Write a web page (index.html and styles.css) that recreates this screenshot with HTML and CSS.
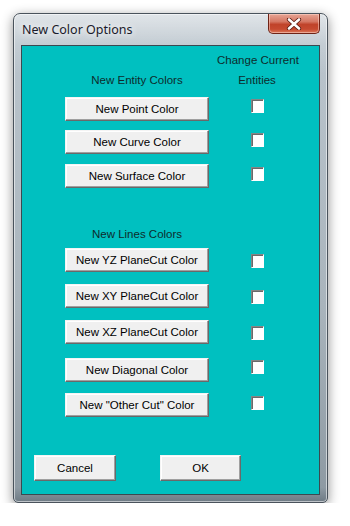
FILE: index.html
```html
<!DOCTYPE html>
<html>
<head>
<meta charset="utf-8">
<link rel="stylesheet" href="styles.css">
</head>
<body>
<div class="window">
  <div class="titlebar">
    <span class="title">New Color Options</span>
    <div class="close">
      <svg width="16" height="12" viewBox="0 0 16 12">
        <path d="M3 1.5 L13 10.5 M13 1.5 L3 10.5" stroke="#5a1a10" stroke-width="4.2" stroke-linecap="round"/>
        <path d="M3 1.5 L13 10.5 M13 1.5 L3 10.5" stroke="#ffffff" stroke-width="2.6" stroke-linecap="round"/>
      </svg>
    </div>
  </div>
  <div class="client">
    <div class="row hdr1">
      <span class="label right">Change Current</span>
    </div>
    <div class="row hdr2">
      <span class="label left">New Entity Colors</span>
      <span class="label right">Entities</span>
    </div>
    <div class="row r-point">
      <button class="btn">New Point Color</button>
      <span class="cb cb-hi"></span>
    </div>
    <div class="row r-curve">
      <button class="btn">New Curve Color</button>
      <span class="cb cb-mid"></span>
    </div>
    <div class="row r-surface">
      <button class="btn">New Surface Color</button>
      <span class="cb cb-mid"></span>
    </div>
    <div class="row hdr3">
      <span class="label left">New Lines Colors</span>
    </div>
    <div class="row r-yz">
      <button class="btn">New YZ PlaneCut Color</button>
      <span class="cb cb-lo"></span>
    </div>
    <div class="row r-xy">
      <button class="btn">New XY PlaneCut Color</button>
      <span class="cb cb-lo"></span>
    </div>
    <div class="row r-xz">
      <button class="btn">New XZ PlaneCut Color</button>
      <span class="cb cb-lo"></span>
    </div>
    <div class="row r-diag">
      <button class="btn">New Diagonal Color</button>
      <span class="cb cb-hi"></span>
    </div>
    <div class="row r-other">
      <button class="btn">New "Other Cut" Color</button>
      <span class="cb cb-mid"></span>
    </div>
    <div class="actions">
      <button class="btn action cancel">Cancel</button>
      <button class="btn action ok">OK</button>
    </div>
  </div>
</div>
</body>
</html>
```

FILE: styles.css
```css
html, body {
  margin: 0;
  padding: 0;
  background: #ffffff;
}

body {
  padding: 13px 0 0 13px;
  font-family: "Liberation Sans", Arial, sans-serif;
}

.window {
  box-sizing: border-box;
  width: 315px;
  height: 490px;
  border: 1px solid #4a535c;
  border-radius: 7px 7px 5px 5px;
  background:
    linear-gradient(180deg, rgba(255,255,255,0.55) 0px, rgba(255,255,255,0.15) 30px, rgba(255,255,255,0) 60px),
    linear-gradient(180deg, #bcc6ce 0%, #a9b4bc 60%, #8e9aa3 97%, #6e7a84 100%);
  padding: 0 7px 7px 7px;
  display: flex;
  flex-direction: column;
  box-shadow: 0 3px 12px rgba(0,0,0,0.45), inset 0 0 0 1px rgba(255,255,255,0.55);
}

.titlebar {
  height: 31px;
  display: flex;
  align-items: flex-start;
  justify-content: space-between;
}

.title {
  margin-top: 7px;
  margin-left: 1px;
  font-family: "Noto Sans", "Open Sans", sans-serif;
  font-size: 12.5px;
  color: #1a1a2a;
  text-shadow: 0 0 6px rgba(255,255,255,0.9), 0 0 10px rgba(255,255,255,0.8);
}

.close {
  box-sizing: border-box;
  width: 52px;
  height: 20px;
  margin-top: 0;
  border: 1px solid #6e2316;
  border-top: none;
  border-radius: 0 0 5px 5px;
  background: linear-gradient(180deg, #e7a595 0%, #d57763 40%, #c0432a 55%, #c64a30 80%, #dc7a5c 100%);
  box-shadow: inset 0 0 0 1px rgba(255,220,210,0.5);
  display: flex;
  align-items: center;
  justify-content: center;
}

.client {
  flex: 1;
  box-sizing: border-box;
  background: #00c0c0;
  border: 1px solid #3b4950;
  display: flex;
  flex-direction: column;
}

.row {
  display: grid;
  grid-template-columns: 43px 144px 8px 80px;
  align-items: start;
}

.label {
  font-size: 11.5px;
  line-height: 20px;
  color: #0e2c2c;
  text-align: center;
  white-space: nowrap;
}

.label.left {
  grid-column: 2;
}

.label.right {
  grid-column: 4;
}

.hdr1 { margin-top: 4px; }
.hdr2 { margin-top: 0; }
.r-point { margin-top: 7px; }
.r-curve { margin-top: 9px; }
.r-surface { margin-top: 10px; }
.hdr3 { margin-top: 36px; }
.r-yz { margin-top: 4px; }
.r-xy { margin-top: 12px; }
.r-xz { margin-top: 12px; }
.r-diag { margin-top: 14px; }
.r-other { margin-top: 11px; }

.btn {
  grid-column: 2;
  box-sizing: border-box;
  height: 24px;
  margin: 0;
  padding: 0;
  font-family: "Liberation Sans", Arial, sans-serif;
  font-size: 11.5px;
  color: #000000;
  background: #f0f0f0;
  border: 1px solid;
  border-color: #f4f4f4 #696969 #696969 #f4f4f4;
  box-shadow: inset -1px -1px 0 #a0a0a0, inset 1px 1px 0 #ffffff;
  border-radius: 0;
}

.cb {
  grid-column: 4;
  justify-self: center;
  box-sizing: border-box;
  width: 13px;
  height: 14px;
  background: #ffffff;
  border: 1px solid;
  border-color: #858585 #ffffff #ffffff #858585;
  box-shadow: inset 1px 1px 0 #6a6a6a;
}

.cb-hi { margin-top: 2px; }
.cb-mid { margin-top: 3px; }
.cb-lo { margin-top: 6px; }

.actions {
  margin-top: 38px;
  padding-left: 12px;
  display: flex;
  gap: 44px;
}

.btn.action {
  height: 26px;
}

.btn.cancel { width: 82px; }
.btn.ok { width: 81px; }
```
